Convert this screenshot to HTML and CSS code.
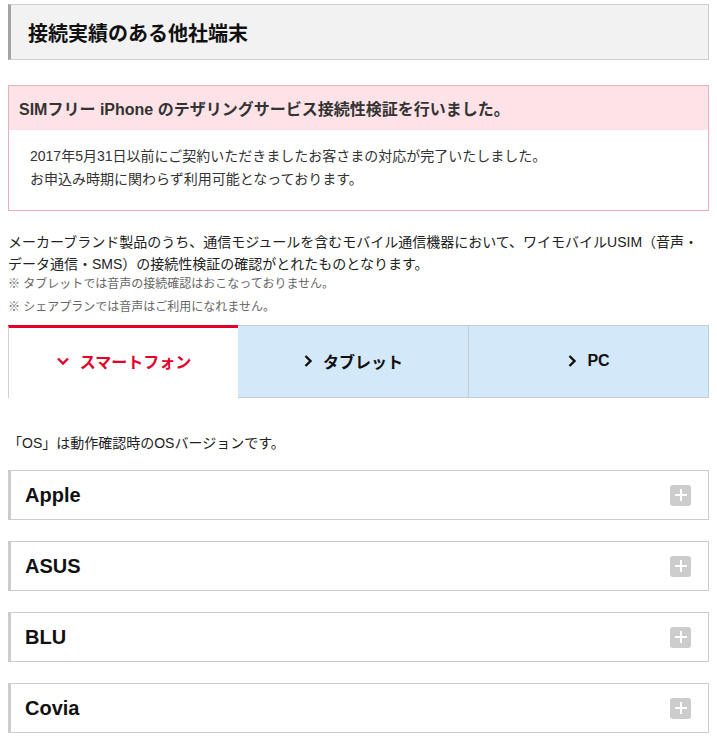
FILE: index.html
```html
<!DOCTYPE html>
<html lang="ja">
<head>
<meta charset="utf-8">
<link rel="stylesheet" href="styles.css">
</head>
<body>
<div class="page">
  <h2 class="section-title">接続実績のある他社端末</h2>

  <div class="notice">
    <div class="notice-head">SIMフリー iPhone のテザリングサービス接続性検証を行いました。</div>
    <div class="notice-body">
      <p>2017年5月31日以前にご契約いただきましたお客さまの対応が完了いたしました。</p>
      <p>お申込み時期に関わらず利用可能となっております。</p>
    </div>
  </div>

  <p class="lead">メーカーブランド製品のうち、通信モジュールを含むモバイル通信機器において、ワイモバイルUSIM（音声・データ通信・SMS）の接続性検証の確認がとれたものとなります。</p>
  <p class="note">※ タブレットでは音声の接続確認はおこなっておりません。</p>
  <p class="note note-2">※ シェアプランでは音声はご利用になれません。</p>

  <div class="tabs">
    <div class="tab tab-active">
      <svg class="chev" width="14" height="10" viewBox="0 0 14 10"><path d="M2 2.5 L7 7.5 L12 2.5" fill="none" stroke="currentColor" stroke-width="2.4"/></svg>
      <span>スマートフォン</span>
    </div>
    <div class="tab">
      <svg class="chev" width="10" height="14" viewBox="0 0 10 14"><path d="M2.5 2 L7.5 7 L2.5 12" fill="none" stroke="currentColor" stroke-width="2.4"/></svg>
      <span>タブレット</span>
    </div>
    <div class="tab">
      <svg class="chev" width="10" height="14" viewBox="0 0 10 14"><path d="M2.5 2 L7.5 7 L2.5 12" fill="none" stroke="currentColor" stroke-width="2.4"/></svg>
      <span>PC</span>
    </div>
  </div>

  <p class="os-note">「OS」は動作確認時のOSバージョンです。</p>

  <div class="makers">
    <div class="maker"><span>Apple</span><i class="plus"></i></div>
    <div class="maker"><span>ASUS</span><i class="plus"></i></div>
    <div class="maker"><span>BLU</span><i class="plus"></i></div>
    <div class="maker"><span>Covia</span><i class="plus"></i></div>
  </div>
</div>
</body>
</html>
```
FILE: styles.css
```css
* { box-sizing: border-box; }
html, body {
  margin: 0;
  padding: 0;
  background: #fff;
}
body {
  font-family: "Liberation Sans", "Noto Sans CJK JP", sans-serif;
  color: #222;
  font-size: 14px;
}
p { margin: 0; }
.page {
  padding: 4px 8px 0 8px;
}
.section-title {
  margin: 0;
  height: 56px;
  display: flex;
  align-items: center;
  padding-left: 17px;
  background: #f2f2f2;
  border: 1px solid #cfcfcf;
  border-left: 3px solid #a3a3a3;
  font-size: 20px;
  font-weight: bold;
  color: #111;
}
.notice {
  margin-top: 25px;
  border: 1px solid #e8b0bf;
}
.notice-head {
  height: 44px;
  background: #fde3e8;
  display: flex;
  align-items: center;
  padding-left: 10px;
  font-size: 16px;
  font-weight: bold;
  color: #333;
}
.notice-body {
  padding: 15px 21px 19px;
  line-height: 23px;
  color: #333;
}
.lead {
  margin-top: 20px;
  line-height: 22px;
  color: #222;
}
.note {
  font-size: 12px;
  line-height: 18px;
  color: #666;
}
.note-2 { margin-top: 5px; }
.tabs {
  margin-top: 9px;
  display: grid;
  grid-template-columns: 230px 231px 1fr;
  height: 73px;
}
.tab {
  display: flex;
  align-items: center;
  justify-content: center;
  gap: 10px;
  background: #d3e8f8;
  border: 1px solid #c8ccd2;
  border-left: none;
  font-size: 16px;
  font-weight: bold;
  color: #111;
  padding-bottom: 2px;
}
.tab-active {
  background: #fff;
  border: none;
  border-top: 3px solid #e3002b;
  border-left: 1px solid #d0d0d0;
  color: #e3002b;
  padding-bottom: 4px;
}
.chev { display: block; }
.os-note {
  margin-top: 34px;
  line-height: 22px;
  color: #222;
}
.makers {
  margin-top: 16px;
  display: flex;
  flex-direction: column;
  gap: 21px;
}
.maker {
  height: 50px;
  display: flex;
  align-items: center;
  justify-content: space-between;
  border: 1px solid #cccccc;
  border-left: 3px solid #cccccc;
  padding: 0 17px 0 14px;
  font-size: 20px;
  font-weight: bold;
  color: #111;
}
.plus {
  width: 21px;
  height: 21px;
  border-radius: 3px;
  background: #cccccc;
  position: relative;
  display: block;
}
.plus::before, .plus::after {
  content: "";
  position: absolute;
  background: #fff;
  left: 50%;
  top: 50%;
  transform: translate(-50%, -50%);
}
.plus::before { width: 12px; height: 2px; }
.plus::after { width: 2px; height: 12px; }
```
